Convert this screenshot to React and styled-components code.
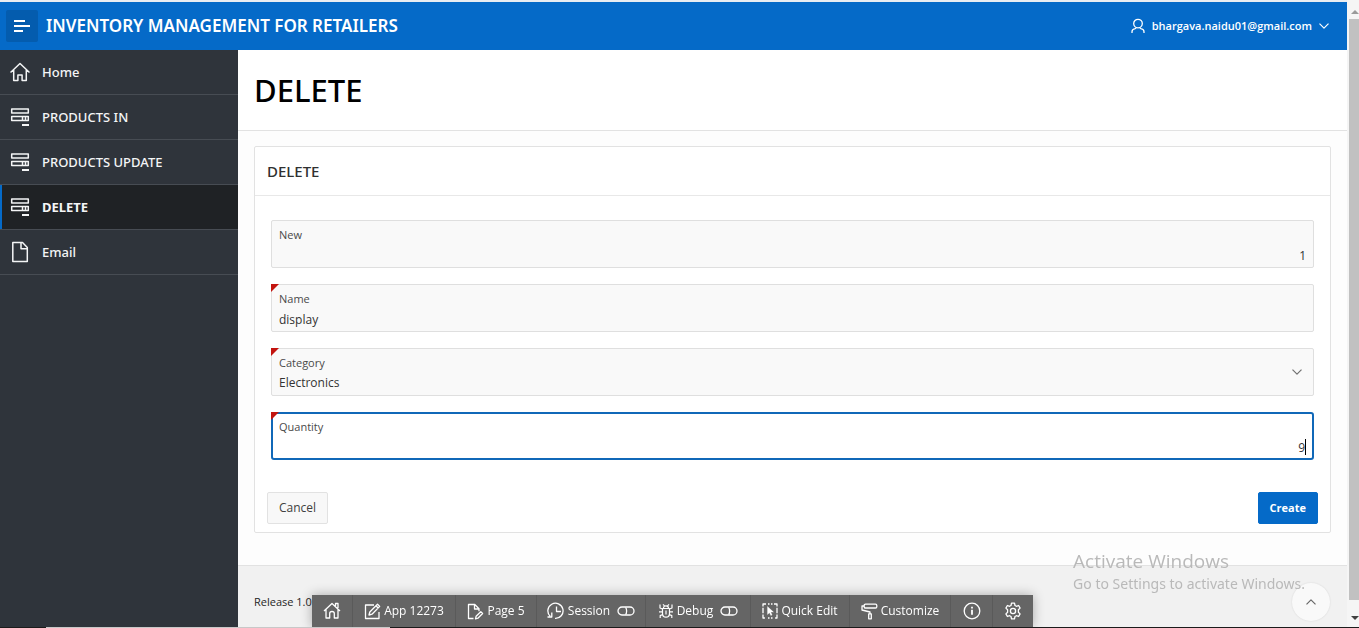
import React from "react";
import styled, { createGlobalStyle, css } from "styled-components";

const font = '"Open Sans", "Noto Sans", sans-serif';
const wideFont = '"Noto Sans", "Open Sans", sans-serif';

const GlobalStyle = createGlobalStyle`
  *, *::before, *::after { box-sizing: border-box; }
  body {
    margin: 0;
    background: #fdfdfd;
    color: #262626;
    font-family: ${font};
    font-size: 12px;
    line-height: 16px;
  }
  button, input, select { font: inherit; color: inherit; }
`;

const Page = styled.div`
  display: flex;
  min-height: 100vh;
`;

const AppFrame = styled.div`
  flex: 1;
  min-width: 0;
  display: flex;
  flex-direction: column;
  border-top: 2px solid #e9edf2;
`;

const Header = styled.header`
  display: flex;
  align-items: center;
  height: 48px;
  padding: 0 18px 0 6px;
  background: #056ac8;
  color: #fff;
`;

const MenuToggle = styled.button`
  width: 32px;
  height: 32px;
  padding: 0;
  display: grid;
  place-items: center;
  border: 0;
  border-radius: 2px;
  background: #045cae;
  color: #fff;
`;

const AppTitle = styled.a`
  margin-left: 8px;
  flex: 1;
  font-family: ${wideFont};
  font-size: 17px;
  line-height: 24px;
  font-weight: 600;
  color: #fff;
  text-decoration: none;
  white-space: nowrap;
`;

const UserButton = styled.button`
  display: flex;
  align-items: center;
  gap: 7px;
  padding: 0;
  border: 0;
  background: none;
  color: #fff;
  font-size: 11px;
  font-weight: 600;
`;

const Body = styled.div`
  flex: 1;
  display: flex;
`;

const Sidebar = styled.nav`
  width: 238px;
  flex: none;
  background: #2f343b;
`;

const NavLink = styled.a`
  display: flex;
  align-items: center;
  gap: 12px;
  height: 45px;
  padding-left: 10px;
  border-bottom: 1px solid #474c53;
  color: #f4f5f6;
  font-family: ${wideFont};
  font-size: 13px;
  text-decoration: none;
  font-weight: 500;
  ${(p) =>
    p.$active &&
    css`
      background: #1f2225;
      box-shadow: inset 2px 0 #056ac8;
      font-weight: 700;
    `}
`;

const Main = styled.main`
  flex: 1;
  min-width: 0;
  display: flex;
  flex-direction: column;
`;

const TitleBar = styled.div`
  padding: 20px 16px;
  background: #fff;
  border-bottom: 1px solid #e2e2e2;
`;

const PageTitle = styled.h1`
  margin: 0;
  font-family: ${wideFont};
  font-size: 31px;
  line-height: 40px;
  font-weight: 500;
  color: #000;
`;

const Card = styled.section`
  margin: 15px 16px 32px;
  background: #fff;
  border: 1px solid #e2e2e2;
  border-radius: 2px;
`;

const CardTitle = styled.h2`
  margin: 0;
  padding: 12px;
  border-bottom: 1px solid #e8e8e8;
  font-family: ${wideFont};
  font-size: 15px;
  line-height: 24px;
  font-weight: 500;
  color: #303030;
`;

const Fields = styled.div`
  display: flex;
  flex-direction: column;
  gap: 16px;
  padding: 24px 16px 32px;
`;

const FieldBox = styled.div`
  position: relative;
  height: 48px;
  padding: 6px 7px 0;
  border: 1px solid #dfdfdf;
  border-radius: 2px;
  background: #f9f9f9;
  ${(p) =>
    p.$focused &&
    css`
      padding: 5px 6px 0;
      border: 2px solid #1068b8;
      border-radius: 3px;
      background: #fff;
    `}
`;

const RequiredMark = styled.span`
  position: absolute;
  top: ${(p) => (p.$focused ? "-2px" : "-1px")};
  left: ${(p) => (p.$focused ? "-2px" : "-1px")};
  border-top: 8px solid #c3140f;
  border-right: 8px solid transparent;
`;

const FieldLabel = styled.label`
  display: block;
  font-size: 11px;
  line-height: 16px;
  color: #4a4a4a;
`;

const ControlRow = styled.div`
  display: flex;
  align-items: center;
  height: 24px;
`;

const controlStyle = css`
  flex: 1;
  min-width: 0;
  height: 24px;
  padding: 0;
  border: 0;
  outline: 0;
  background: transparent;
  color: #333;
  font-size: 12px;
  text-align: ${(p) => (p.$numeric ? "right" : "left")};
`;

const TextInput = styled.input`
  ${controlStyle}
`;

const Select = styled.select`
  ${controlStyle}
  appearance: none;
`;

const SelectArrow = styled.span`
  position: absolute;
  top: 20px;
  right: 11px;
  display: flex;
  color: #707070;
  pointer-events: none;
`;

const Caret = styled.span`
  width: 1px;
  height: 16px;
  background: #000;
`;

const Actions = styled.div`
  display: flex;
  justify-content: space-between;
  padding: 0 12px 8px;
`;

const Button = styled.button`
  height: 32px;
  padding: 0 11px;
  border: 1px solid ${(p) => (p.$primary ? "#056ac8" : "#e2e2e2")};
  border-radius: 2px;
  background: ${(p) => (p.$primary ? "#056ac8" : "#f8f8f8")};
  color: ${(p) => (p.$primary ? "#fff" : "#404040")};
  font-size: ${(p) => (p.$primary ? "11px" : "12px")};
  font-weight: ${(p) => (p.$primary ? 700 : 400)};
`;

const Footer = styled.footer`
  flex: 1;
  padding: 28px 16px 16px;
  background: #f1f1f1;
  border-top: 1px solid #e2e2e2;
  font-size: 11px;
  color: #1f1f1f;
`;

const ScrollTrack = styled.div`
  width: 12px;
  flex: none;
  display: flex;
  flex-direction: column;
  padding-left: 2px;
  background: #f5f5f5;
`;

const ScrollArrow = styled.span`
  height: ${(p) => (p.$down ? "28px" : "19px")};
  display: flex;
  justify-content: flex-end;
  align-items: center;
  color: ${(p) => (p.$down ? "#404040" : "#9a9a9a")};
  padding-top: ${(p) => (p.$down ? "8px" : "4px")};
`;

const ScrollThumb = styled.div`
  flex: 1;
  background: #c1c1c1;
`;

const ToolbarDock = styled.div`
  position: fixed;
  left: 0;
  right: 14px;
  bottom: 1px;
  display: flex;
  justify-content: center;
  pointer-events: none;
`;

const Toolbar = styled.div`
  display: flex;
  height: 32px;
  background: #656565;
  box-shadow: 0 0 12px rgba(0, 0, 0, 0.3);
  pointer-events: auto;
`;

const ToolButton = styled.button`
  min-width: ${(p) => p.$width}px;
  display: flex;
  align-items: center;
  justify-content: center;
  gap: 3px;
  padding: 0;
  border: 0;
  border-right: 1px solid #5a5a5a;
  background: none;
  color: #fff;
  font-size: 12px;
  font-weight: 500;
  white-space: nowrap;
  &:last-child { border-right: 0; }
`;

const SwitchMark = styled.span`
  display: flex;
  margin-left: 4px;
`;

const Watermark = styled.div`
  position: fixed;
  right: 54px;
  bottom: 34px;
  color: #b9b9b9;
  pointer-events: none;
`;

const WatermarkTitle = styled.div`
  font-size: 19px;
  line-height: 26px;
`;

const WatermarkText = styled.div`
  font-family: ${wideFont};
  font-size: 14px;
  line-height: 20px;
`;

const BackToTop = styled.button`
  position: fixed;
  right: 29px;
  bottom: 7px;
  width: 38px;
  height: 38px;
  padding: 0;
  display: grid;
  place-items: center;
  border: 0;
  border-radius: 50%;
  background: #f9f9f9;
  box-shadow: 0 0 2px rgba(0, 0, 0, 0.12);
  color: #666;
`;

const BottomEdge = styled.div`
  position: fixed;
  left: 0;
  right: 0;
  bottom: 0;
  height: 1px;
  display: flex;
  background: #1b1b1b;
`;

const EdgeLight = styled.span`
  width: 344px;
  margin-left: 46px;
  background: #c8c8c8;
`;

function Svg({ w = 16, h = w, box, children, sw = 1, ...rest }) {
  return (
    <svg
      width={w}
      height={h}
      viewBox={box || `0 0 ${w} ${h}`}
      fill="none"
      stroke="currentColor"
      strokeWidth={sw}
      strokeLinejoin="round"
      aria-hidden="true"
      {...rest}
    >
      {children}
    </svg>
  );
}

const MenuIcon = () => (
  <Svg w={16} h={14} sw={2}>
    <path d="M0 2h11M0 7h16M0 12h9" />
  </Svg>
);

const UserIcon = () => (
  <Svg w={14} h={16} sw={1.3}>
    <circle cx="7" cy="5.6" r="4.3" />
    <path d="M1 15v-1.2c0-2 1.3-3 3.3-3.2l1-.8M13 15v-1.2c0-2-1.3-3-3.3-3.2l-1-.8" />
  </Svg>
);

const Chevron = ({ up, width = 10 }) => (
  <Svg w={width} h={6} box="0 0 10 6" sw={1.2}>
    <path d={up ? "M.5 5.3 5 .8l4.500 4.500" : "M.5.7 5 5.200 9.500.7"} />
  </Svg>
);

const HomeIcon = () => (
  <Svg w={20} h={20} sw={1.5}>
    <path d="M.5 10.500 10 1.500l9.500 9M3.700 8v10.500h4.200v-5.500h4.200v5.500h4.200V8" />
  </Svg>
);

const FormIcon = () => (
  <Svg w={20} h={20} sw={1.5}>
    <path d="M1.700 2h16.600v4H1.700zM1.700 9.500h16.600v4H1.700zM12.500 9.500v4M15.500 9.500v4" />
    <path d="M12 18h7" strokeWidth="2" />
  </Svg>
);

const FileIcon = () => (
  <Svg w={20} h={22} sw={1.5}>
    <path d="M2.800 1.500h9.700l4.800 5v14H2.800zM11 1.800v6h6" />
  </Svg>
);

const ToolHome = () => (
  <Svg w={18} h={18} sw={1.3}>
    <path d="M1 9 9 1.500 17 9M3 7.500V16h3.700v-4.500c0-1.300 1-2 2.300-2s2.300.7 2.300 2V16H15V7M12.500 4V1.500H15V6" />
  </Svg>
);

const ToolEdit = () => (
  <Svg w={17} h={17} sw={1.3}>
    <path d="M10 2H1.500v13.500H15V9M5 12l.8-3L13.500 1.200l2.200 2.200L8 11.200zM12 2.800 14.200 5" />
  </Svg>
);

const ToolPage = () => (
  <Svg w={17} h={17} sw={1.3}>
    <path d="M6.500 15.500H1.500v-14h6.300L12 5.700v2.500M7.500 1.500V6H12M8.500 15.800l.6-2.500 4.700-4.600 1.800 1.800-4.700 4.700z" />
  </Svg>
);

const ToolSession = () => (
  <Svg w={18} h={18} sw={1.3}>
    <path d="M3.200 14.300A7.600 7.600 0 1 1 8 16.400M9.500 4.500V9.500h4.500M4.800 10.500v4.500H.5" />
  </Svg>
);

const ToolDebug = () => (
  <Svg w={16} h={16} sw={1.2}>
    <path d="M4.500 5.500h7v5c0 2.300-1.500 3.700-3.500 3.700s-3.500-1.400-3.500-3.700zM5.500 5.300C5.500 3.500 6.500 2.800 8 2.800s2.500.7 2.500 2.500M8 7.500v4M1 8.800h3.500M11.500 8.800H15M4.500 6 2 5V1.500M11.500 6 14 5V1.500M4.700 11.500 2.200 12.600V15M11.300 11.500l2.500 1.100V15M5 1.300l1.500 1.500M11 1.300 9.500 2.800" />
  </Svg>
);

const ToolSelect = () => (
  <Svg w={16} h={16} sw={1.3}>
    <path d="M4 1H1v14h3M12 1h3v14h-3" strokeDasharray="5.500 1.200" />
    <path d="M6 1h1.500M9 1h1.500M6 15h1.500M9 15h1.500" />
    <path d="M5.500 3.500v8l2-1.800 1.300 2.800 1.300-.6-1.300-2.800h2.700z" fill="currentColor" strokeWidth=".3" />
  </Svg>
);

const ToolRoller = () => (
  <Svg w={17} h={17} sw={1.3}>
    <path d="M4.500 1.200h10c.8 0 1.300.5 1.300 1.200v1.400c0 .7-.5 1.200-1.300 1.200h-10c-.8 0-1.300-.5-1.300-1.200V2.400c0-.7.5-1.200 1.300-1.200zM3.200 3H1v4l8 2v2M7.700 10.800h2.600v5H7.700z" />
  </Svg>
);

const ToolInfo = () => (
  <Svg w={18} h={18} sw={1.3}>
    <circle cx="9" cy="9" r="7.800" />
    <path d="M9 7.800v5M9 4.800v1.800" strokeWidth="1.800" />
  </Svg>
);

const ToolGear = () => (
  <Svg w={18} h={18} sw={1.3}>
    <circle cx="9" cy="9" r="2.600" />
    <path d="M7.500 1.200h3l.5 2.300 1.400.8 2.200-.8 1.500 2.600-1.700 1.600v2.600l1.700 1.600-1.500 2.600-2.200-.8-1.400.8-.5 2.300h-3L7 14.500l-1.400-.8-2.200.8-1.500-2.600 1.700-1.600V7.700L1.900 6.100l1.500-2.600 2.200.8L7 3.500z" />
  </Svg>
);

const ToolSwitch = () => (
  <Svg w={18} h={10} sw={1.3}>
    <rect x="1" y="1" width="16" height="8" rx="4" />
    <path d="M8.500 1.500c1.500 1 1.500 6 0 7" />
  </Svg>
);

const navItems = [
  { label: "Home", icon: HomeIcon },
  { label: "PRODUCTS IN", icon: FormIcon },
  { label: "PRODUCTS UPDATE", icon: FormIcon },
  { label: "DELETE", icon: FormIcon, active: true },
  { label: "Email", icon: FileIcon },
];

const tools = [
  { icon: ToolHome, name: "Home", width: 41 },
  { icon: ToolEdit, label: "App 12273", width: 103 },
  { icon: ToolPage, label: "Page 5", width: 81 },
  { icon: ToolSession, label: "Session", width: 109, toggle: true },
  { icon: ToolDebug, label: "Debug", width: 105, toggle: true },
  { icon: ToolSelect, label: "Quick Edit", width: 99 },
  { icon: ToolRoller, label: "Customize", width: 101 },
  { icon: ToolInfo, name: "Page info", width: 42 },
  { icon: ToolGear, name: "Settings", width: 40 },
];

function Field({ id, label, required, focused, children }) {
  return (
    <FieldBox $focused={focused}>
      {required && <RequiredMark $focused={focused} />}
      <FieldLabel htmlFor={id}>{label}</FieldLabel>
      <ControlRow>{children}</ControlRow>
    </FieldBox>
  );
}

export default function App() {
  return (
    <>
      <GlobalStyle />
      <Page>
        <AppFrame>
          <Header>
            <MenuToggle aria-label="Toggle navigation">
              <MenuIcon />
            </MenuToggle>
            <AppTitle href="#">INVENTORY MANAGEMENT FOR RETAILERS</AppTitle>
            <UserButton>
              <UserIcon />
              bhargava.naidu01@gmail.com
              <Chevron />
            </UserButton>
          </Header>
          <Body>
            <Sidebar>
              {navItems.map(({ label, icon: Icon, active }) => (
                <NavLink key={label} href="#" $active={active}>
                  <Icon />
                  {label}
                </NavLink>
              ))}
            </Sidebar>
            <Main>
              <TitleBar>
                <PageTitle>DELETE</PageTitle>
              </TitleBar>
              <Card>
                <CardTitle>DELETE</CardTitle>
                <Fields>
                  <Field id="new" label="New">
                    <TextInput id="new" $numeric defaultValue="1" />
                  </Field>
                  <Field id="name" label="Name" required>
                    <TextInput id="name" defaultValue="display" />
                  </Field>
                  <Field id="category" label="Category" required>
                    <Select id="category" defaultValue="Electronics">
                      <option>Electronics</option>
                    </Select>
                    <SelectArrow>
                      <Chevron />
                    </SelectArrow>
                  </Field>
                  <Field id="quantity" label="Quantity" required focused>
                    <TextInput id="quantity" $numeric defaultValue="9" />
                    <Caret />
                  </Field>
                </Fields>
                <Actions>
                  <Button>Cancel</Button>
                  <Button $primary>Create</Button>
                </Actions>
              </Card>
              <Footer>Release 1.0</Footer>
            </Main>
          </Body>
        </AppFrame>
        <ScrollTrack>
          <ScrollArrow>
            <Svg w={8} h={5} stroke="none" fill="currentColor">
              <path d="M0 5 4 1l4 4z" />
            </Svg>
          </ScrollArrow>
          <ScrollThumb />
          <ScrollArrow $down>
            <Svg w={8} h={5} stroke="none" fill="currentColor">
              <path d="M0 0h8L4 4z" />
            </Svg>
          </ScrollArrow>
        </ScrollTrack>
      </Page>
      <BackToTop aria-label="Back to top">
        <Chevron up />
      </BackToTop>
      <Watermark>
        <WatermarkTitle>Activate Windows</WatermarkTitle>
        <WatermarkText>Go to Settings to activate Windows.</WatermarkText>
      </Watermark>
      <ToolbarDock>
        <Toolbar>
          {tools.map(({ icon: Icon, label, name, width, toggle }) => (
            <ToolButton key={label || name} $width={width} aria-label={label ? undefined : name}>
              <Icon />
              {label}
              {toggle && (
                <SwitchMark>
                  <ToolSwitch />
                </SwitchMark>
              )}
            </ToolButton>
          ))}
        </Toolbar>
      </ToolbarDock>
      <BottomEdge>
        <EdgeLight />
      </BottomEdge>
    </>
  );
}
